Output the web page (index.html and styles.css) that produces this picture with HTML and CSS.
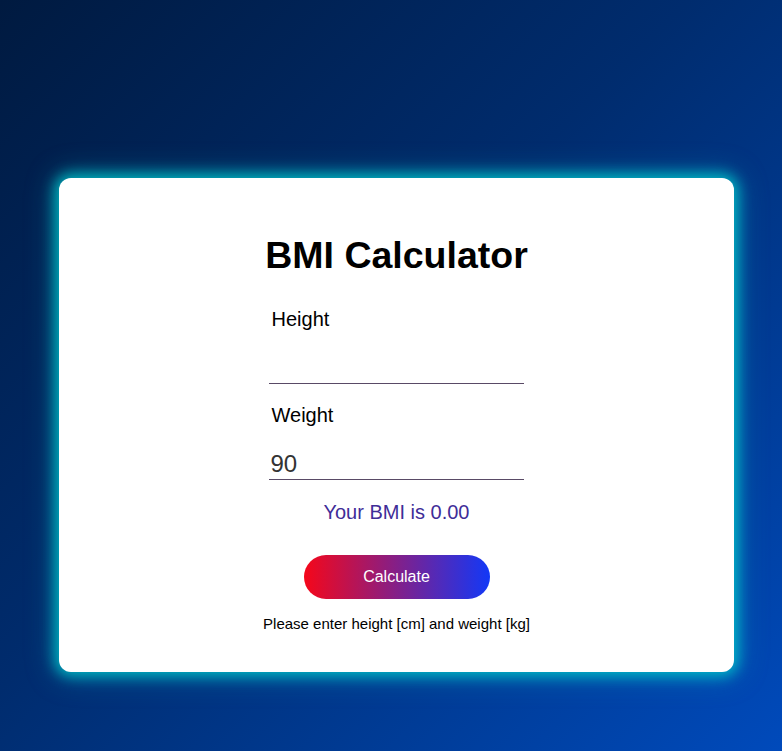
FILE: index.html
```html
<!DOCTYPE html>
<html lang="en">
<head>
<meta charset="utf-8">
<title>BMI Calculator</title>
<link rel="stylesheet" href="styles.css">
</head>
<body>
  <main class="card">
    <h1 class="title">BMI Calculator</h1>
    <div class="form">
      <label class="label" for="height">Height</label>
      <input class="field" id="height" type="text" value="">
      <label class="label" for="weight">Weight</label>
      <input class="field" id="weight" type="text" value="90">
    </div>
    <p class="result">Your BMI is 0.00</p>
    <button class="btn" type="button">Calculate</button>
    <p class="hint">Please enter height [cm] and weight [kg]</p>
  </main>
</body>
</html>
```

FILE: styles.css
```css
html, body {
  margin: 0;
  padding: 0;
  height: 100%;
}
body {
  background: linear-gradient(135deg, #001a40 0%, #002c6e 45%, #004abb 100%);
  font-family: "Liberation Sans", Arial, sans-serif;
  overflow: hidden;
  padding-top: 178px;
  box-sizing: border-box;
}
.card {
  margin-left: 59px;
  width: 675px;
  height: 494px;
  background: #fff;
  border-radius: 12px;
  box-shadow: 0 0 14px 4px rgba(0, 200, 205, 0.85), 0 0 28px 6px rgba(0, 175, 195, 0.35);
  display: flex;
  flex-direction: column;
  align-items: center;
  box-sizing: border-box;
  padding-top: 57px;
}
.title {
  margin: 0;
  font-size: 37.5px;
  font-weight: bold;
  line-height: 41px;
  color: #000;
}
.form {
  width: 255px;
  display: flex;
  flex-direction: column;
  margin-top: 32px;
  margin-left: -1px;
}
.label {
  font-size: 20px;
  line-height: 23px;
  color: #000;
  padding-left: 3px;
}
.field {
  border: none;
  border-bottom: 1px solid #594a66;
  outline: none;
  font-family: "Liberation Sans", Arial, sans-serif;
  font-size: 24px;
  color: #333;
  padding: 0 2px;
  height: 30px;
  line-height: 30px;
  margin-top: 22px;
  margin-bottom: 20px;
  background: transparent;
  box-sizing: content-box;
}
.result {
  margin: 0;
  margin-top: 1px;
  font-size: 20px;
  line-height: 23px;
  color: #3f2d98;
}
.btn {
  margin-top: 31px;
  width: 186px;
  height: 44px;
  border: none;
  border-radius: 22px;
  background: linear-gradient(to right, #f5071a, #1238f7);
  color: #fff;
  font-family: "Liberation Sans", Arial, sans-serif;
  font-size: 16px;
}
.hint {
  margin: 0;
  margin-top: 16px;
  font-size: 15px;
  line-height: 17px;
  color: #000;
}
```
